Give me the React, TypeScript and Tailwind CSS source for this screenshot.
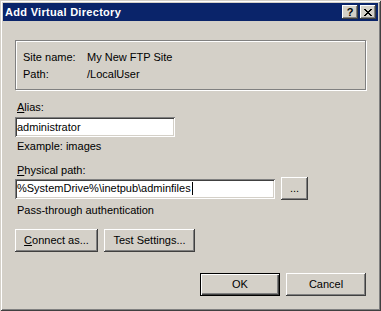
const raised =
  'shadow-[inset_-1px_-1px_#404040,inset_1px_1px_#fff,inset_-2px_-2px_#808080,inset_2px_2px_#d4d0c8]'
const sunken =
  'shadow-[inset_1px_1px_#808080,inset_-1px_-1px_#fff,inset_2px_2px_#404040,inset_-2px_-2px_#d4d0c8]'

const Button = ({ children, className = '' }: { children: React.ReactNode; className?: string }) => (
  <div className={`flex h-[23px] items-center justify-center bg-[#d4d0c8] ${raised} ${className}`}>
    {children}
  </div>
)

const App = () => {
  return (
    <div
      className="flex h-[311px] w-[381px] flex-col bg-[#d4d0c8] p-[3px] text-[11px] leading-[13px] text-black shadow-[inset_1px_1px_#d4d0c8,inset_-1px_-1px_#404040,inset_2px_2px_#fff,inset_-2px_-2px_#808080]"
      style={{ fontFamily: '"Liberation Sans", Arial, sans-serif' }}
    >
      {/* title bar */}
      <div className="flex h-[18px] items-center justify-between bg-[#0a246a] pl-[2px] pr-[2px]">
        <span className="font-bold tracking-[0.3px] text-white">Add Virtual Directory</span>
        <div className="flex gap-[2px]">
          <div className={`flex h-[14px] w-[16px] items-center justify-center bg-[#d4d0c8] ${raised}`}>
            <span className="text-[11px] font-bold leading-none">?</span>
          </div>
          <div className={`flex h-[14px] w-[16px] items-center justify-center bg-[#d4d0c8] ${raised}`}>
            <svg width="8" height="7" viewBox="0 0 8 7" shapeRendering="crispEdges">
              <path d="M0 0h2v1H0zM6 0h2v1H6zM1 1h2v1H1zM5 1h2v1H5zM2 2h4v1H2zM3 3h2v1H3zM2 4h4v1H2zM1 5h2v1H1zM5 5h2v1H5zM0 6h2v1H0zM6 6h2v1H6z" fill="#000" />
            </svg>
          </div>
        </div>
      </div>

      <div className="flex flex-1 flex-col px-[12px]">
        {/* site info group */}
        <div className="mt-[19px] flex h-[50px] flex-col gap-[4px] border border-[#808080] pl-[7px] pt-[10px] shadow-[inset_1px_1px_#fff,1px_1px_#fff]">
          <div className="flex">
            <span className="w-[64px]">Site name:</span>
            <span>My New FTP Site</span>
          </div>
          <div className="flex">
            <span className="w-[64px]">Path:</span>
            <span>/LocalUser</span>
          </div>
        </div>

        <div className="mt-[11px] pl-[2px]">
          <span className="underline">A</span>lias:
        </div>
        <div className={`mt-[3px] flex h-[20px] w-[160px] items-center bg-white pl-[2px] ${sunken}`}>
          administrator
        </div>
        <div className="mt-[3px] pl-[2px]">Example: images</div>

        <div className="mt-[11px] pl-[2px]">
          <span className="underline">P</span>hysical path:
        </div>
        <div className="flex items-center gap-[6px]">
          <div className={`flex h-[20px] w-[260px] items-center bg-white pl-[2px] ${sunken}`}>
            %SystemDrive%\inetpub\adminfiles
            <span className="ml-[1px] h-[13px] w-[1px] bg-black" />
          </div>
          <Button className="w-[27px]">...</Button>
        </div>
        <div className="mt-[4px] pl-[2px]">Pass-through authentication</div>

        <div className="mt-[12px] flex gap-[6px]">
          <Button className="w-[83px]">
            <span>
              <span className="underline">C</span>onnect as...
            </span>
          </Button>
          <Button className="w-[91px]">Test Settings...</Button>
        </div>

        <div className="mt-auto mb-[12px] flex justify-end gap-[6px]">
          <div className="flex h-[23px] w-[80px] items-center justify-center border border-black bg-[#d4d0c8] shadow-[inset_1px_1px_#fff,inset_-1px_-1px_#404040,inset_-2px_-2px_#808080]">
            OK
          </div>
          <Button className="w-[80px]">Cancel</Button>
        </div>
      </div>
    </div>
  )
}

export default App
